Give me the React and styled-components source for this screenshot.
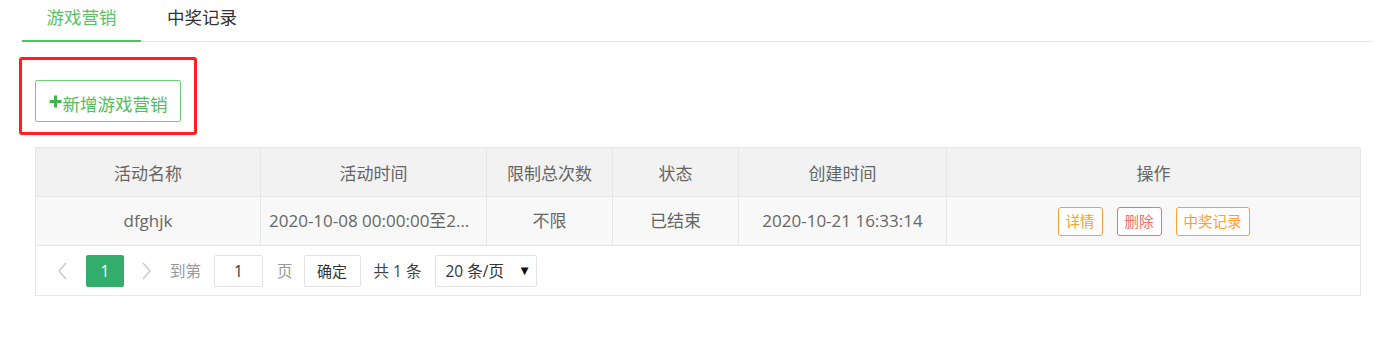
import React from 'react';
import styled, { createGlobalStyle } from 'styled-components';

const GlobalStyle = createGlobalStyle`
  html, body {
    margin: 0;
    padding: 0;
    background: #fff;
  }
  body {
    font-family: "Open Sans", "Noto Sans CJK SC", sans-serif;
    color: #666;
  }
  * {
    box-sizing: border-box;
  }
`;

const columns = ['活动名称', '活动时间', '限制总次数', '状态', '创建时间', '操作'];

const rows = [
  {
    name: 'dfghjk',
    time: '2020-10-08 00:00:00至2020-10-31 23:59:59',
    limit: '不限',
    status: '已结束',
    created: '2020-10-21 16:33:14',
  },
];

const PlusIcon = () => (
  <svg width="13" height="13" viewBox="0 0 13 13">
    <path d="M6.5 0.5v12M0.5 6.5h12" stroke="#3fb44f" strokeWidth="3" fill="none" />
  </svg>
);

const Chevron = ({ next }) => (
  <svg width="9" height="18" viewBox="0 0 9 18">
    <path
      d={next ? 'M1 1l7 8-7 8' : 'M8 1L1 9l7 8'}
      stroke="#c6c6c6"
      strokeWidth="1.3"
      fill="none"
    />
  </svg>
);

const App = () => {
  return (
    <>
      <GlobalStyle />
      <PageStyle>
        <TabBarStyle>
          <TabStyle $active>游戏营销</TabStyle>
          <TabStyle>中奖记录</TabStyle>
        </TabBarStyle>

        <HighlightStyle>
          <AddButtonStyle>
            <PlusIcon />
            新增游戏营销
          </AddButtonStyle>
        </HighlightStyle>

        <TableStyle>
          {columns.map((c, i) => (
            <HeadCellStyle key={c} $last={i === columns.length - 1}>{c}</HeadCellStyle>
          ))}
          {rows.map((r) => (
            <React.Fragment key={r.name}>
              <CellStyle>{r.name}</CellStyle>
              <CellStyle $ellipsis>{r.time}</CellStyle>
              <CellStyle>{r.limit}</CellStyle>
              <CellStyle>{r.status}</CellStyle>
              <CellStyle>{r.created}</CellStyle>
              <CellStyle $last>
                <ActionGroupStyle>
                  <ActionButtonStyle $color="#f7a033">详情</ActionButtonStyle>
                  <ActionButtonStyle $color="#f86d6d">删除</ActionButtonStyle>
                  <ActionButtonStyle $color="#f7a033">中奖记录</ActionButtonStyle>
                </ActionGroupStyle>
              </CellStyle>
            </React.Fragment>
          ))}
          <PagerStyle>
            <ArrowStyle><Chevron /></ArrowStyle>
            <PageNumStyle>1</PageNumStyle>
            <ArrowStyle $next><Chevron next /></ArrowStyle>
            <PagerTextStyle $ml={11}>到第</PagerTextStyle>
            <PageInputStyle defaultValue="1" />
            <PagerTextStyle $ml={14}>页</PagerTextStyle>
            <ConfirmButtonStyle>确定</ConfirmButtonStyle>
            <PagerTextStyle $ml={13} $dark>共 1 条</PagerTextStyle>
            <LimitSelectStyle>
              <span>20 条/页</span>
              <CaretStyle>▼</CaretStyle>
            </LimitSelectStyle>
          </PagerStyle>
        </TableStyle>
      </PageStyle>
    </>
  );
};

const PageStyle = styled.div`
  width: 1373px;
  padding-left: 22px;
`;

const TabBarStyle = styled.div`
  display: flex;
  height: 42px;
  border-bottom: 1px solid #e8e8e8;
`;

const TabStyle = styled.div`
  width: ${(p) => (p.$active ? '119px' : '122px')};
  height: ${(p) => (p.$active ? '42px' : '41px')};
  margin-bottom: -1px;
  padding-bottom: 8px;
  display: flex;
  align-items: center;
  justify-content: center;
  font-size: 17.5px;
  color: ${(p) => (p.$active ? '#56c266' : '#333')};
  border-bottom: ${(p) => (p.$active ? '2px solid #4cc45e' : 'none')};
  cursor: pointer;
`;

const HighlightStyle = styled.div`
  width: 178px;
  margin: 15px 0 12px -3px;
  padding: 20px 13px 10px 13px;
  border: 3px solid #ff1f1f;
  border-radius: 3px;
`;

const AddButtonStyle = styled.button`
  width: 146px;
  height: 42px;
  padding: 4px 0 0 0;
  display: flex;
  align-items: center;
  justify-content: center;
  gap: 1px;
  background: #fff;
  border: 1px solid #6ccf7a;
  border-radius: 2px;
  font-family: "Open Sans", "Noto Sans CJK SC", sans-serif;
  font-size: 17.5px;
  color: #4fbd5f;
  cursor: pointer;
  svg {
    margin-top: -3px;
  }
`;

const TableStyle = styled.div`
  width: 1326px;
  margin-left: 13px;
  display: grid;
  grid-template-columns: 225px 226px 126px 126px 208px 1fr;
  border: 1px solid #e6e6e6;
`;

const HeadCellStyle = styled.div`
  height: 49px;
  display: flex;
  align-items: center;
  justify-content: center;
  background: #f2f2f2;
  border-bottom: 1px solid #e6e6e6;
  border-right: ${(p) => (p.$last ? 'none' : '1px solid #e6e6e6')};
  font-size: 17px;
  color: #666;
`;

const CellStyle = styled.div`
  height: 49px;
  padding: 0 8px;
  display: ${(p) => (p.$ellipsis ? 'block' : 'flex')};
  align-items: center;
  justify-content: center;
  line-height: 48px;
  background: #f8f8f8;
  border-bottom: 1px solid #e6e6e6;
  border-right: ${(p) => (p.$last ? 'none' : '1px solid #e6e6e6')};
  font-size: 17px;
  color: #666;
  white-space: nowrap;
  overflow: hidden;
  text-overflow: ellipsis;
`;

const ActionGroupStyle = styled.div`
  display: flex;
  gap: 14px;
`;

const ActionButtonStyle = styled.button`
  height: 29px;
  padding: 0 7px;
  background: #fff;
  border: 1px solid ${(p) => p.$color};
  border-radius: 3px;
  font-family: "Open Sans", "Noto Sans CJK SC", sans-serif;
  font-size: 14.5px;
  line-height: 27px;
  color: ${(p) => p.$color};
  cursor: pointer;
`;

const PagerStyle = styled.div`
  grid-column: 1 / -1;
  height: 49px;
  padding-left: 13px;
  display: flex;
  align-items: center;
  background: #fff;
  font-size: 15.5px;
`;

const ArrowStyle = styled.span`
  width: 26px;
  height: 20px;
  margin-left: ${(p) => (p.$next ? '9px' : '0')};
  margin-right: ${(p) => (p.$next ? '0' : '11px')};
  display: flex;
  align-items: center;
  justify-content: center;
`;

const PageNumStyle = styled.span`
  width: 38px;
  height: 32px;
  display: flex;
  align-items: center;
  justify-content: center;
  background: #33ad6b;
  border-radius: 2px;
  color: #fff;
  font-size: 15.5px;
`;

const PagerTextStyle = styled.span`
  margin-left: ${(p) => p.$ml}px;
  color: ${(p) => (p.$dark ? '#444' : '#999')};
  white-space: nowrap;
`;

const PageInputStyle = styled.input`
  width: 49px;
  height: 32px;
  margin-left: 13px;
  padding: 0;
  border: 1px solid #e2e2e2;
  border-radius: 2px;
  text-align: center;
  font-family: "Open Sans", "Noto Sans CJK SC", sans-serif;
  font-size: 15.5px;
  color: #333;
  outline: none;
`;

const ConfirmButtonStyle = styled.button`
  width: 57px;
  height: 32px;
  margin-left: 11px;
  padding: 0;
  background: #fff;
  border: 1px solid #e2e2e2;
  border-radius: 2px;
  font-family: "Open Sans", "Noto Sans CJK SC", sans-serif;
  font-size: 15px;
  color: #333;
  cursor: pointer;
`;

const LimitSelectStyle = styled.div`
  width: 102px;
  height: 32px;
  margin-left: 14px;
  padding: 0 8px 0 9px;
  display: flex;
  align-items: center;
  justify-content: space-between;
  border: 1px solid #e2e2e2;
  border-radius: 2px;
  color: #333;
  font-size: 15.5px;
`;

const CaretStyle = styled.span`
  font-family: "DejaVu Sans", sans-serif;
  font-size: 10px;
  color: #111;
`;

export default App;
